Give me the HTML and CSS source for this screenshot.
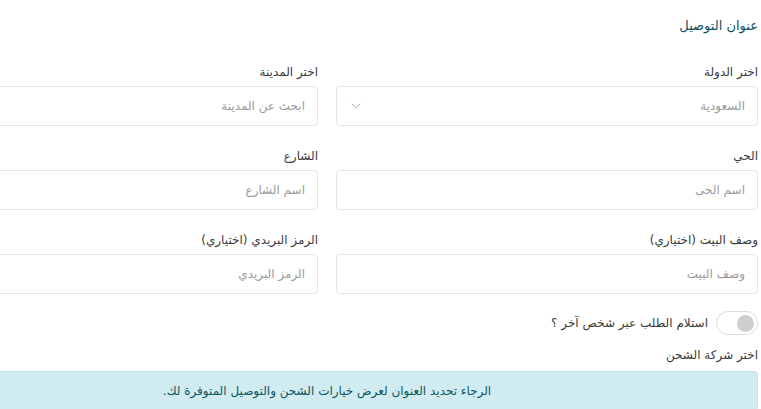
FILE: index.html
```html
<!DOCTYPE html>
<html lang="ar" dir="rtl">
<head>
<meta charset="utf-8">
<title>عنوان التوصيل</title>
<link rel="stylesheet" href="styles.css">
</head>
<body>
<div class="page">
  <h3 class="title">عنوان التوصيل</h3>
  <div class="grid">
    <div class="group">
      <label class="label">اختر الدولة</label>
      <div class="control select">
        <span class="placeholder">السعودية</span>
        <svg class="chev" width="10" height="6" viewBox="0 0 10 6"><path d="M1 0.8l4 4 4-4" fill="none" stroke="#a8a8a8" stroke-width="1"/></svg>
      </div>
    </div>
    <div class="group">
      <label class="label">اختر المدينة</label>
      <input class="control" type="text" placeholder="ابحث عن المدينة">
    </div>
    <div class="group">
      <label class="label">الحي</label>
      <input class="control" type="text" placeholder="اسم الحى">
    </div>
    <div class="group">
      <label class="label">الشارع</label>
      <input class="control" type="text" placeholder="اسم الشارع">
    </div>
    <div class="group">
      <label class="label">وصف البيت (اختياري)</label>
      <input class="control" type="text" placeholder="وصف البيت">
    </div>
    <div class="group">
      <label class="label">الرمز البريدي (اختياري)</label>
      <input class="control" type="text" placeholder="الرمز البريدي">
    </div>
  </div>
  <div class="toggle-row">
    <span class="switch"><span class="knob"></span></span>
    <span class="toggle-text">استلام الطلب عبر شخص آخر ؟</span>
  </div>
  <div class="label ship">اختر شركة الشحن</div>
  <div class="alert">الرجاء تحديد العنوان لعرض خيارات الشحن والتوصيل المتوفرة لك.</div>
</div>
</body>
</html>
```
FILE: styles.css
```css
html, body {
  margin: 0;
  padding: 0;
  background: #ffffff;
  overflow: hidden;
}
body {
  font-family: "DejaVu Sans", "Noto Sans", sans-serif;
  color: #3a3a3a;
  font-size: 12px;
}
.page {
  width: 862px;
  margin-right: 3px;
  padding-top: 16px;
}
.title {
  margin: 0 0 26px 0;
  font-size: 13px;
  line-height: 20px;
  font-weight: normal;
  color: #124d5a;
}
.grid {
  display: grid;
  grid-template-columns: 422px 422px;
  column-gap: 18px;
}
.group {
  display: flex;
  flex-direction: column;
  margin-bottom: 20px;
}
.label {
  display: block;
  font-size: 12px;
  line-height: 20px;
  color: #3a3a3a;
  margin-bottom: 4px;
}
.control {
  box-sizing: border-box;
  height: 40px;
  width: 100%;
  border: 1px solid #e4e4e4;
  border-radius: 4px;
  background: #fff;
  padding: 0 12px;
  font-family: inherit;
  font-size: 12px;
  color: #555;
  outline: none;
  margin: 0;
}
.control::placeholder {
  color: #9a9a9a;
}
.select {
  display: flex;
  align-items: center;
  justify-content: space-between;
  padding: 0 12px 0 14px;
}
.placeholder {
  color: #9a9a9a;
}
.chev {
  display: block;
}
.toggle-row {
  display: flex;
  align-items: center;
  gap: 8px;
  margin-top: -3px;
  height: 24px;
}
.switch {
  box-sizing: border-box;
  width: 42px;
  height: 24px;
  border: 1px solid #dcdcdc;
  border-radius: 12px;
  background: #fff;
  display: flex;
  align-items: center;
  padding: 0 3px;
}
.knob {
  width: 17px;
  height: 17px;
  border-radius: 50%;
  background: #cfcfcf;
}
.toggle-text {
  font-size: 12px;
  color: #3a3a3a;
}
.ship {
  margin-top: 10px;
  margin-bottom: 6px;
}
.alert {
  box-sizing: border-box;
  background: #d1ecf1;
  border: 1px solid #bee5eb;
  border-radius: 4px;
  color: #0c5460;
  text-align: center;
  font-size: 12px;
  line-height: 20px;
  padding: 9px 20px;
}
```
